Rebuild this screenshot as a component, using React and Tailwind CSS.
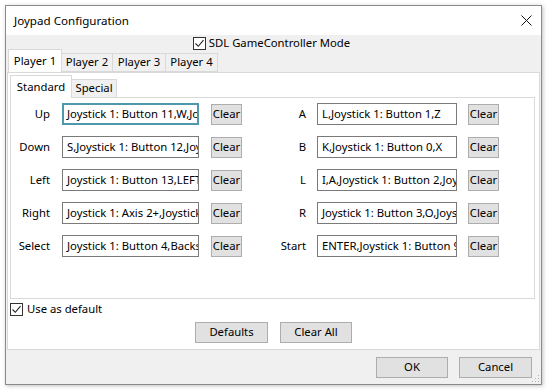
import React from "react";

const font = { fontFamily: '"Noto Sans", "Open Sans", sans-serif' };

function Check() {
  return (
    <span className="inline-flex w-[13px] h-[13px] border border-[#333] bg-white items-center justify-center shrink-0">
      <svg width="11" height="11" viewBox="0 0 11 11">
        <path d="M1.5 5.5 L4.3 8.3 L9.5 2.2" fill="none" stroke="#222" strokeWidth="1.1" />
      </svg>
    </span>
  );
}

function Field({ value, w, focused }) {
  return (
    <div
      className={
        "h-[22px] bg-white flex items-center overflow-hidden whitespace-nowrap " +
        (focused ? "border-2 border-[#4f98ad] pl-[3px]" : "border border-[#7a7a7a] pl-[4px]")
      }
      style={{ width: w }}
    >
      {value}
    </div>
  );
}

function ClearBtn() {
  return (
    <div className="w-[31px] h-[21px] bg-[#e1e1e1] border border-[#adadad] flex items-center justify-center overflow-hidden whitespace-nowrap">
      Clear
    </div>
  );
}

const rows = [
  ["Up", "Joystick 1: Button 11,W,Joystick", "A", "L,Joystick 1: Button 1,Z"],
  ["Down", "S,Joystick 1: Button 12,Joystick", "B", "K,Joystick 1: Button 0,X"],
  ["Left", "Joystick 1: Button 13,LEFT", "L", "I,A,Joystick 1: Button 2,Joystick"],
  ["Right", "Joystick 1: Axis 2+,Joystick", "R", "Joystick 1: Button 3,O,Joystick"],
  ["Select", "Joystick 1: Button 4,Backspace", "Start", "ENTER,Joystick 1: Button 9"],
];

export default function App() {
  return (
    <div className="w-[548px] h-[391px] bg-white pl-[5px] pt-[5px] text-[11.3px] text-black" style={font}>
      <div className="w-[537px] h-[380px] border border-[#8a8a8a] flex flex-col shadow-[1px_1px_4px_rgba(0,0,0,0.25)] relative">
        {/* title bar */}
        <div className="h-[29px] bg-white flex items-center justify-between pl-[8px] pr-[9px] shrink-0">
          <span className="text-[11.6px]">Joypad Configuration</span>
          <svg width="11" height="11" viewBox="0 0 11 11">
            <path d="M0.5 0.5 L10.5 10.5 M10.5 0.5 L0.5 10.5" stroke="#111" strokeWidth="1" />
          </svg>
        </div>
        {/* body */}
        <div className="flex-1 bg-[#f0f0f0] flex flex-col">
          <div className="h-[15px] flex items-center justify-center gap-[3px] pt-[2px] pr-[4px]">
            <Check />
            <span>SDL GameController Mode</span>
          </div>
          {/* outer tabs */}
          <div className="flex items-end h-[22px] pl-[2px] relative z-10">
            <div className="w-[54px] h-[23px] bg-white border border-[#d9d9d9] border-b-0 flex items-center justify-center">
              Player 1
            </div>
            <div className="w-[51px] h-[19px] border border-[#d9d9d9] border-l-0 flex items-center justify-center">Player 2</div>
            <div className="w-[53px] h-[19px] border border-[#d9d9d9] border-l-0 flex items-center justify-center">Player 3</div>
            <div className="w-[52px] h-[19px] border border-[#d9d9d9] border-l-0 flex items-center justify-center">Player 4</div>
          </div>
          {/* outer pane */}
          <div className="ml-[1px] mr-[1px] h-[278px] bg-white border border-[#d9d9d9] flex flex-col pl-[2px] pr-[4px]">
            {/* inner tabs */}
            <div className="flex items-end h-[24px] relative z-10 mt-[1px]">
              <div className="w-[62px] h-[23px] bg-white border border-[#d9d9d9] border-b-0 flex items-center justify-center">
                Standard
              </div>
              <div className="w-[45px] h-[19px] bg-[#f0f0f0] border border-[#d9d9d9] border-l-0 flex items-center justify-center">
                Special
              </div>
            </div>
            <div className="h-[202px] border border-[#d9d9d9] -mt-[1px] pt-[5px] flex flex-col gap-[11px]">
              {rows.map((r, i) => (
                <div key={i} className="flex items-center h-[22px]">
                  <div className="w-[39px] text-right">{r[0]}</div>
                  <div className="ml-[12px]">
                    <Field value={r[1]} w={137} focused={i === 0} />
                  </div>
                  <div className="ml-[12px]">
                    <ClearBtn />
                  </div>
                  <div className="w-[64px] text-right">{r[2]}</div>
                  <div className="ml-[11px]">
                    <Field value={r[3]} w={140} />
                  </div>
                  <div className="ml-[11px]">
                    <ClearBtn />
                  </div>
                </div>
              ))}
            </div>
            <div className="flex items-center gap-[4px] mt-[3px] h-[14px]">
              <Check />
              <span>Use as default</span>
            </div>
            <div className="flex justify-center gap-[12px] mt-[6px] pl-[2px]">
              <div className="w-[73px] h-[21px] bg-[#e1e1e1] border border-[#adadad] flex items-center justify-center">
                Defaults
              </div>
              <div className="w-[72px] h-[21px] bg-[#e1e1e1] border border-[#adadad] flex items-center justify-center">
                Clear All
              </div>
            </div>
          </div>
          {/* bottom buttons */}
          <div className="flex justify-end gap-[11px] pr-[9px] pt-[7px]">
            <div className="w-[72px] h-[21px] bg-[#e1e1e1] border border-[#adadad] flex items-center justify-center">
              OK
            </div>
            <div className="w-[73px] h-[21px] bg-[#e1e1e1] border border-[#adadad] flex items-center justify-center">
              Cancel
            </div>
          </div>
        </div>
        <svg className="absolute right-[1px] bottom-[1px]" width="8" height="8" viewBox="0 0 8 8">
          <rect x="6" y="0" width="1" height="1" fill="#b0b0b0" />
          <rect x="3" y="3" width="1" height="1" fill="#b0b0b0" />
          <rect x="6" y="3" width="1" height="1" fill="#b0b0b0" />
          <rect x="0" y="6" width="1" height="1" fill="#b0b0b0" />
          <rect x="3" y="6" width="1" height="1" fill="#b0b0b0" />
          <rect x="6" y="6" width="1" height="1" fill="#b0b0b0" />
        </svg>
      </div>
    </div>
  );
}
